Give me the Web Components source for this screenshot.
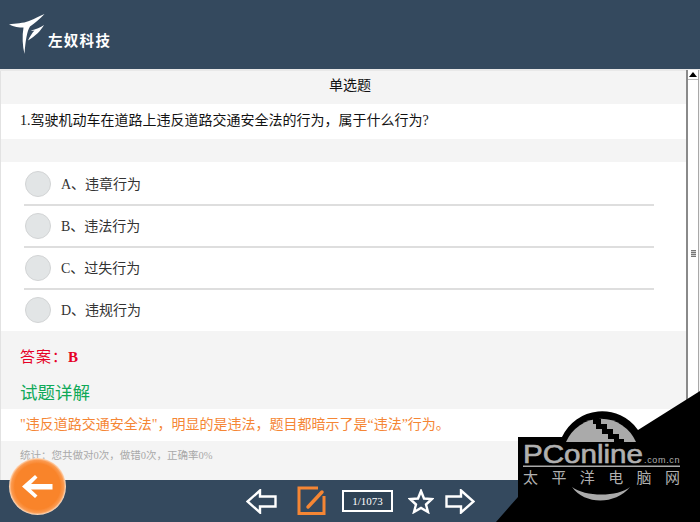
<!DOCTYPE html>
<html lang="zh">
<head>
<meta charset="utf-8">
<title>单选题</title>
<style>
    html, body { margin: 0; height: 100%; overflow: hidden; }
    body { font-family: "Liberation Serif", "Noto Sans CJK SC", serif; }
</style>
</head>
<body>
<quiz-app>
    <app-header slot="header">左奴科技</app-header>
    <quiz-band tone="gray" height="33" align="center" size="14" nudge="2" color="#111" slot="main">单选题</quiz-band>
    <quiz-band tone="white" height="35" slot="main" size="14" nudge="0" color="#111">1.驾驶机动车在道路上违反道路交通安全法的行为，属于什么行为?</quiz-band>
    <quiz-band tone="gray" height="23" slot="main"></quiz-band>
    <option-list slot="main">
        <quiz-option>A、违章行为</quiz-option>
        <quiz-option>B、违法行为</quiz-option>
        <quiz-option>C、过失行为</quiz-option>
        <quiz-option last>D、违规行为</quiz-option>
    </option-list>
    <quiz-band tone="gray" height="52" slot="main" size="15" color="#e60026" spacing="1">答案：<b>B</b></quiz-band>
    <quiz-band tone="gray" height="26" slot="main" size="17.500" color="#0fa958" nudge="6">试题详解</quiz-band>
    <quiz-band tone="white" height="32" slot="main" size="14" color="#f58634">"违反道路交通安全法"，明显的是违法，题目都暗示了是“违法”行为。</quiz-band>
    <quiz-band tone="gray" height="39" slot="main" size="10.500" color="#a9a9a9" nudge="9">统计：您共做对0次，做错0次，正确率0%</quiz-band>
    <quiz-footer slot="footer"></quiz-footer>
    <back-fab slot="overlay"></back-fab>
    <pc-watermark slot="overlay"></pc-watermark>
</quiz-app>

<script>
class QuizApp extends HTMLElement {
    constructor() {
        super();
        this.attachShadow({ mode: 'open' });
        this.shadowRoot.innerHTML = `
            <style>
                :host { display: grid; grid-template-rows: 69px 1fr 42px; width: 700px; height: 522px; position: relative; overflow: hidden; background: #f4f4f4; }
                .middle { display: flex; min-height: 0; border-top: 2px solid #e8e8e8; box-sizing: border-box; }
                .content { flex: 1; display: flex; flex-direction: column; border-left: 1px solid #e2e2e2; min-width: 0; }
            </style>
            <slot name="header"></slot>
            <div class="middle">
                <div class="content"><slot name="main"></slot></div>
                <fake-scrollbar></fake-scrollbar>
            </div>
            <slot name="footer"></slot>
            <slot name="overlay"></slot>
        `;
    }
}

class AppHeader extends HTMLElement {
    constructor() {
        super();
        this.attachShadow({ mode: 'open' });
        this.shadowRoot.innerHTML = `
            <style>
                :host { display: flex; background: #34495e; color: #fff; align-items: flex-start; padding: 14px 0 0 9px; box-sizing: border-box; font: 700 14.5px "Noto Sans CJK SC", sans-serif; letter-spacing: 1.3px; }
                svg { display: block; flex: none; }
                span { margin: 16px 0 0 3px; line-height: 20px; }
            </style>
            <svg width="36" height="40" viewBox="0 0 36 40">
                <path fill="#fff" d="M0 10.5C7 9 14 9.500 20 7C26 4.500 31 2 35.500 0C31 5 26 9 21 12.500C18 17 16.500 27 15.500 40C13.500 32 13 22 14.500 13.500C10 13.500 5 13 0 10.500Z"/>
                <path fill="#fff" d="M35 11C32 16.500 26.500 22 19 26.500C21 22.500 23 19 25.500 16.500C24 16.800 23 17 22 16.500C27 15.500 31.500 13.500 35 11Z"/>
            </svg>
            <span><slot></slot></span>
        `;
    }
}

class QuizBand extends HTMLElement {
    constructor() {
        super();
        this.attachShadow({ mode: 'open' });
    }

    connectedCallback() {
        const bg = this.getAttribute('tone') === 'white' ? '#fff' : '#f4f4f4';
        const size = this.getAttribute('size') || 13;
        const color = this.getAttribute('color') || '#222';
        const center = this.getAttribute('align') === 'center';
        const nudge = this.getAttribute('nudge') || 0;
        const spacing = this.getAttribute('spacing') || 0;
        this.shadowRoot.innerHTML = `
            <style>
                :host { display: flex; align-items: center; justify-content: ${center ? 'center' : 'flex-start'}; flex: none; box-sizing: border-box; height: ${this.getAttribute('height')}px; padding-left: ${center ? 13 : 19}px; padding-bottom: ${nudge}px; background: ${bg}; color: ${color}; font-size: ${size}px; letter-spacing: ${spacing}px; white-space: nowrap; }
                div { line-height: 1.2; }
            </style>
            <div><slot></slot></div>
        `;
    }
}

class OptionList extends HTMLElement {
    constructor() {
        super();
        this.attachShadow({ mode: 'open' });
        this.shadowRoot.innerHTML = `
            <style>
                :host { display: flex; flex-direction: column; background: #fff; padding: 2px 32px 0 23px; height: 169px; box-sizing: border-box; overflow: hidden; flex: none; }
            </style>
            <slot></slot>
        `;
    }
}

class QuizOption extends HTMLElement {
    constructor() {
        super();
        this.attachShadow({ mode: 'open' });
        this.shadowRoot.innerHTML = `
            <style>
                :host { display: flex; align-items: center; gap: 10px; height: 42px; flex: none; box-sizing: border-box; padding-left: 1px; border-bottom: 2px solid #dedede; font-size: 14px; color: #333; }
                :host([last]) { border-bottom-color: transparent; }
                i { display: block; width: 26px; height: 26px; box-sizing: border-box; border-radius: 50%; background: #e2e5e6; border: 1px solid #d2d4d5; }
                span { padding-bottom: 2px; }
            </style>
            <i></i><span><slot></slot></span>
        `;
    }
}

class FakeScrollbar extends HTMLElement {
    constructor() {
        super();
        this.attachShadow({ mode: 'open' });
        this.shadowRoot.innerHTML = `
            <style>
                :host { display: flex; flex-direction: column; align-items: center; flex: none; width: 10px; margin: -1px 1px 0 0; background: #fff; border-left: 2px solid #8a8a8a; border-right: 1px solid #a8a8a8; }
                .up { display: flex; justify-content: center; align-self: stretch; height: 10px; box-sizing: border-box; padding-top: 2px; border-bottom: 1px solid #bbb; }
                svg { display: block; }
                .grip { margin-top: 170px; width: 5px; height: 7px; background: repeating-linear-gradient(#777 0 1px, #ccc 1px 2px); }
            </style>
            <div class="up"><svg width="8" height="6" viewBox="0 0 8 6"><path d="M0 5L4 0L8 5Z" fill="#000"/></svg></div>
            <div class="grip"></div>
        `;
    }
}

class QuizFooter extends HTMLElement {
    constructor() {
        super();
        this.attachShadow({ mode: 'open' });
        this.shadowRoot.innerHTML = `
            <style>
                :host { display: flex; align-items: center; background: #34495e; padding-left: 246px; box-sizing: border-box; }
                svg { display: block; flex: none; fill: none; stroke-width: 2.400; }
                .pen { margin-left: 20px; stroke: #f58634; stroke-width: 3; }
                .count { margin-left: 15px; width: 51px; height: 22px; box-sizing: border-box; border: 2px solid #fff; background: #2f4356; color: #fff; font-size: 11px; display: flex; align-items: center; justify-content: center; }
                .star { margin-left: 15px; }
                .next { margin-left: 11px; }
            </style>
            <svg width="31" height="25" viewBox="0 0 31 25" stroke="#fff"><path d="M14 1.500L1.500 12.500L14 23.500V17.500H29.500V7.500H14Z"/></svg>
            <svg class="pen" width="30" height="30" viewBox="0 0 30 30"><path d="M27 10V27.500H2V2H21"/><path d="M11 21L25 6" stroke-linecap="round" stroke-width="3.500"/></svg>
            <div class="count">1/1073</div>
            <svg class="star" width="26" height="25" viewBox="0 0 26 25" stroke="#fff"><path d="M13 2L16 9.500L24 10L18 15.500L20 23L13 19L6 23L8 15.500L2 10L10 9.500Z"/></svg>
            <svg class="next" width="30" height="25" viewBox="0 0 30 25" stroke="#fff"><path d="M16 1.500L28.500 12.500L16 23.500V17.500H1.500V7.500H16Z"/></svg>
        `;
    }
}

class BackFab extends HTMLElement {
    constructor() {
        super();
        this.attachShadow({ mode: 'open' });
        this.shadowRoot.innerHTML = `
            <style>
                :host { position: absolute; left: 9px; top: 458px; width: 57px; height: 57px; border-radius: 50%; background: radial-gradient(circle closest-side, #f9842a 0 80%, #fb9a50 92%, #fde0c8 100%); display: flex; align-items: center; justify-content: center; }
            </style>
            <svg width="31" height="23" viewBox="0 0 31 23"><path d="M13 0L0 11.500L13 23L15.500 20.500L9 14.500H30.500V9H9L15.500 2.500Z" fill="#fff"/></svg>
        `;
    }
}

class PcWatermark extends HTMLElement {
    constructor() {
        super();
        this.attachShadow({ mode: 'open' });
        this.shadowRoot.innerHTML = `
            <style>
                :host { position: absolute; left: 490px; top: 380px; width: 210px; height: 142px; }
                svg { display: block; }
                text { fill: #b0b0b0; }
                .brand { font: 25px "Liberation Sans", sans-serif; stroke: #b0b0b0; stroke-width: .6px; }
                .domain { font: 9px "Liberation Sans", sans-serif; letter-spacing: .5px; }
                .cn { font: 15px "Noto Sans CJK SC", sans-serif; }
            </style>
            <svg width="210" height="142" viewBox="0 0 210 142">
                <path d="M6 142L28 117V57H72A44 44 0 0 1 148 50L210 11V142Z" fill="#000"/>
                <path d="M76 62A38 38 0 0 1 146 62H76Z" fill="#aaa"/>
                <path d="M103 39h8v5h6v5h6v5h6v5h5v3h-10v-3h-6v-5h-6v-5h-6v-5h-3Z" fill="#000"/>
                <text class="brand" x="33" y="83" textLength="120" lengthAdjust="spacingAndGlyphs">PConline</text>
                <text class="domain" x="154" y="83" textLength="36">.com.cn</text>
                <rect x="33" y="85.500" width="157" height="1.500" fill="#aaa"/>
                <text class="cn" x="33" y="103" textLength="157">太平洋电脑网</text>
                <path d="M82 107C95 125 125 125 140 107C128 117 95 117 82 107Z" fill="#aaa"/>
            </svg>
        `;
    }
}

customElements.define('quiz-app', QuizApp);
customElements.define('app-header', AppHeader);
customElements.define('quiz-band', QuizBand);
customElements.define('option-list', OptionList);
customElements.define('quiz-option', QuizOption);
customElements.define('fake-scrollbar', FakeScrollbar);
customElements.define('quiz-footer', QuizFooter);
customElements.define('back-fab', BackFab);
customElements.define('pc-watermark', PcWatermark);
</script>
</body>
</html>
